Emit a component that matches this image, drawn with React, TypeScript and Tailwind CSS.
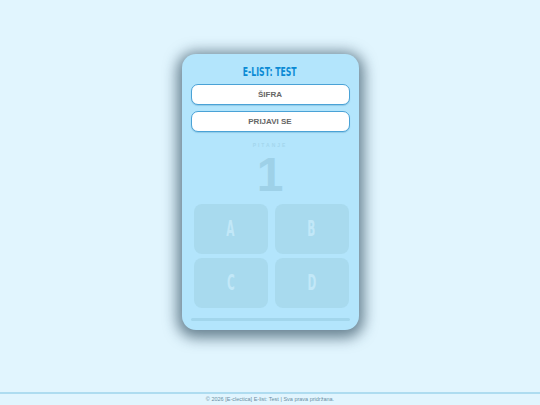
import React from 'react';

const condensed = { fontFamily: '"DejaVu Sans Condensed", "Liberation Sans", sans-serif' };

const AnswerTile: React.FC<{ letter: string }> = ({ letter }) => (
  <div className="h-[50px] rounded-[8px] bg-[#a8daee] flex items-center justify-center">
    <span className="inline-block text-[21px] leading-none font-bold text-[#c2e8f8] scale-x-[0.56]" style={condensed}>
      {letter}
    </span>
  </div>
);

export default function App() {
  return (
    <div className="min-h-screen flex flex-col bg-[#e1f5fe]" style={{ fontFamily: '"Liberation Sans", Arial, sans-serif' }}>
      <main className="flex-1 flex items-center justify-center pb-[8px]">
        <div className="w-[177px] h-[276px] rounded-[14px] bg-[#b3e5fc] px-[9px] pt-[9px] pb-[9px] flex flex-col shadow-[0_3px_14px_5px_rgba(25,55,75,0.6)]">
          <h1 className="text-center text-[13px] leading-[17px] font-bold text-[#0a8ad4]" style={condensed}>
            <span className="inline-block scale-x-[0.66]">E-LIST: TEST</span>
          </h1>
          <div className="mt-[4px] h-[21px] rounded-[7px] bg-white border-[1.5px] border-[#4aa2d6] shadow-[0_1px_1px_rgba(40,120,170,0.25)] flex items-center justify-center text-[8px] font-bold text-[#666]">
            ŠIFRA
          </div>
          <button className="mt-[6px] h-[21px] rounded-[7px] bg-white border-[1.5px] border-[#4aa2d6] shadow-[0_1px_1px_rgba(40,120,170,0.25)] flex items-center justify-center text-[8px] font-bold text-[#666]">
            PRIJAVI SE
          </button>
          <div className="mt-[10px] text-center text-[5px] leading-[6px] font-bold tracking-[2px] text-[#a3d6ed]">
            PITANJE
          </div>
          <div className="mt-[3px] text-center text-[48px] leading-[48px] font-bold text-[#9ed1e8]">1</div>
          <div className="mt-[5px] pl-[3px] pr-[1px] grid grid-cols-2 gap-x-[7px] gap-y-[4px]">
            <AnswerTile letter="A" />
            <AnswerTile letter="B" />
            <AnswerTile letter="C" />
            <AnswerTile letter="D" />
          </div>
          <div className="mt-[10px] h-[3px] rounded-full bg-[#a2d6ec]" />
        </div>
      </main>
      <footer className="border-t-2 border-[#aedcf0] h-[13px] flex items-center justify-center text-[5.5px] text-[#6b8fa3]">
        © 2026 [E-clectica] E-list: Test | Sva prava pridržana.
      </footer>
    </div>
  );
}
